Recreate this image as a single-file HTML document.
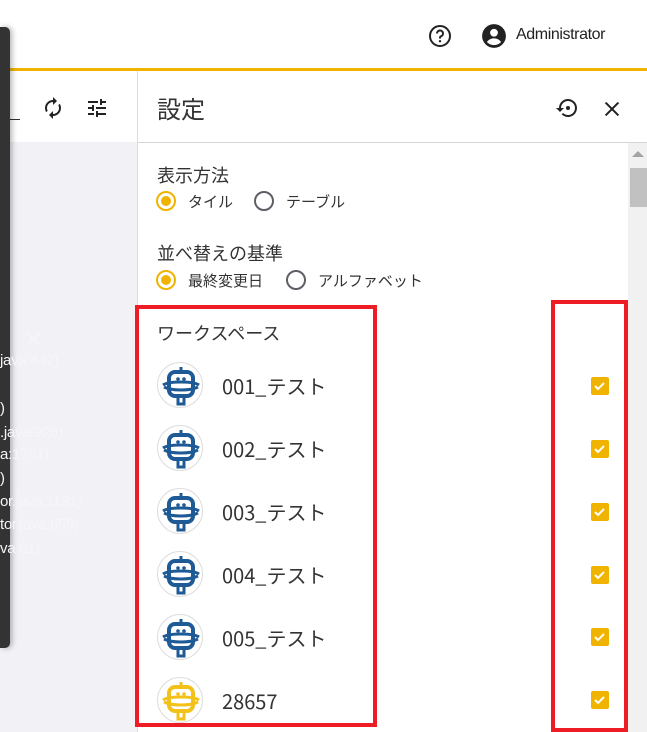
<!DOCTYPE html>
<html><head><meta charset="utf-8"><style>
*{margin:0;padding:0;box-sizing:border-box}
body{width:647px;height:732px;overflow:hidden;background:#fff;font-family:"Liberation Sans","Noto Sans CJK JP",sans-serif;color:#333;position:relative}
.abs{position:absolute}
.t{font-family:"Noto Sans CJK JP","Liberation Sans",sans-serif}
.radio{position:absolute;width:20px;height:20px;border-radius:50%;border:2px solid #5f5d66}
.radio.on{border-color:#f0b400}
.radio.on::after{content:"";position:absolute;left:3px;top:3px;width:10px;height:10px;border-radius:50%;background:#f0b400}
.cb{position:absolute;left:591px;width:18px;height:18px;border-radius:2px;background:#f0b400}
.av{position:absolute;left:157px;width:46px;height:46px;border-radius:50%;border:1px solid #ddd;background:#fff;overflow:hidden}
.nm{position:absolute;left:222px;font-size:20px;color:#333}
.lg{position:absolute;font-size:15px;color:#f6f6f9;font-family:"Liberation Sans",sans-serif;letter-spacing:-0.3px}
</style></head><body>
<!-- header -->
<div class="abs" style="left:0;top:68px;width:647px;height:3px;background:#f0b400"></div>
<svg class="abs" style="left:428px;top:24px" width="24" height="24" viewBox="0 0 24 24"><circle cx="12" cy="12" r="10" fill="none" stroke="#222" stroke-width="2"/><path d="M9 9.5a3 3 0 1 1 4 2.8c-.7.3-1 .8-1 1.5v.7" fill="none" stroke="#222" stroke-width="2"/><circle cx="12" cy="17.2" r="1.2" fill="#222"/></svg>
<svg class="abs" style="left:481px;top:23px" width="26" height="26" viewBox="0 0 24 24"><circle cx="12" cy="12" r="11" fill="#222"/><circle cx="12" cy="9" r="3.6" fill="#fff"/><path d="M5.5 17.5c1.5-2.3 4-3.3 6.5-3.3s5 1 6.5 3.3c-1.6 1.8-4 2.8-6.5 2.8s-4.9-1-6.5-2.8z" fill="#fff"/></svg>
<div class="abs" style="left:516px;top:26px;font-size:16px;color:#222;letter-spacing:-0.4px">Administrator</div>
<!-- left column -->
<div class="abs" style="left:0;top:71px;width:137px;height:71px;background:#fff"></div>
<div class="abs" style="left:0;top:142px;width:137px;height:590px;background:#f2f2f6"></div>
<div class="abs" style="left:137px;top:71px;width:1px;height:661px;background:#ddd"></div>
<div class="abs" style="left:0;top:119px;width:20px;height:1px;background:#333"></div>
<svg class="abs" style="left:41px;top:96px" width="24" height="24" viewBox="0 0 24 24"><path d="M12 6v3l4-4-4-4v3c-4.4 0-8 3.6-8 8 0 1.6.5 3 1.2 4.3L6.7 14.8C6.3 14 6 13 6 12c0-3.3 2.7-6 6-6zm6.8 1.7L17.3 9.2c.4.8.7 1.8.7 2.8 0 3.3-2.7 6-6 6v-3l-4 4 4 4v-3c4.4 0 8-3.6 8-8 0-1.6-.5-3-1.2-4.3z" fill="#222"/></svg>
<svg class="abs" style="left:85px;top:96px" width="24" height="24" viewBox="0 0 24 24"><path d="M3 17v2h6v-2H3zM3 5v2h10V5H3zm10 16v-2h8v-2h-8v-2h-2v6h2zM7 9v2H3v2h4v2h2V9H7zm14 4v-2H11v2h10zm-6-4h2V7h4V5h-4V3h-2v6z" fill="#222"/></svg>
<div class="abs" style="left:0;top:27px;width:10px;height:621px;background:#333;border-radius:0 5px 5px 0;box-shadow:2px 0 6px rgba(0,0,0,.3)"></div>
<div class="lg" style="left:24px;top:327px;font-size:22px">✕</div>
<div class="lg" style="left:0;top:352px">java:442)</div>
<div class="lg" style="left:0;top:400px">)</div>
<div class="lg" style="left:0;top:424px">.java:926)</div>
<div class="lg" style="left:0;top:446px">a:1791)</div>
<div class="lg" style="left:0;top:470px">)</div>
<div class="lg" style="left:0;top:493px">or.java:1191)</div>
<div class="lg" style="left:0;top:516px">tor.java:659)</div>
<div class="lg" style="left:0;top:540px">va:61)</div>
<!-- panel header -->
<div class="abs t" style="left:157px;top:90px;font-size:24px;color:#333">設定</div>
<svg class="abs" style="left:555px;top:96px" width="24" height="24" viewBox="0 0 24 24"><path d="M13 3a9 9 0 0 0-9 9H1l4 4 4-4H6a7 7 0 1 1 2.05 4.95l-1.42 1.42A9 9 0 1 0 13 3z" fill="#222"/><circle cx="13" cy="12" r="2" fill="#222"/></svg>
<svg class="abs" style="left:601px;top:98px" width="22" height="22" viewBox="0 0 24 24"><path d="M5 5l14 14M19 5L5 19" stroke="#222" stroke-width="2.2"/></svg>
<div class="abs" style="left:138px;top:142px;width:509px;height:1px;background:#d5d5d5"></div>
<!-- scrollbar -->
<div class="abs" style="left:628px;top:143px;width:19px;height:589px;background:#f1f1f1"></div>
<div class="abs" style="left:632px;top:151px;width:0;height:0;border-left:6px solid transparent;border-right:6px solid transparent;border-bottom:6px solid #a3a3a3"></div>
<div class="abs" style="left:630px;top:168px;width:17px;height:39px;background:#c1c1c1"></div>
<!-- settings -->
<div class="abs t" style="left:157px;top:162px;font-size:18px">表示方法</div>
<div class="radio on" style="left:156px;top:191px"></div>
<div class="abs t" style="left:188px;top:191px;font-size:15px">タイル</div>
<div class="radio" style="left:254px;top:191px"></div>
<div class="abs t" style="left:286px;top:191px;font-size:15px">テーブル</div>
<div class="abs t" style="left:157px;top:240px;font-size:18px">並べ替えの基準</div>
<div class="radio on" style="left:156px;top:270px"></div>
<div class="abs t" style="left:188px;top:270px;font-size:15px">最終変更日</div>
<div class="radio" style="left:286px;top:270px"></div>
<div class="abs t" style="left:318px;top:270px;font-size:15px">アルファベット</div>
<div class="abs t" style="left:157px;top:320px;font-size:18px">ワークスペース</div>

<svg width="0" height="0" style="position:absolute"><defs>
<g id="bot"><path d="M23 4v5" stroke="currentColor" stroke-width="3"/><rect x="11" y="9" width="24" height="24" rx="6" fill="none" stroke="currentColor" stroke-width="4"/><path d="M5 22c6-4 30-4 36 0M6 24c8 4 26 4 34 0" fill="none" stroke="currentColor" stroke-width="3"/><circle cx="20" cy="16" r="1.8" fill="currentColor"/><circle cx="26" cy="16" r="1.8" fill="currentColor"/><path d="M20 35v6h6v-6" fill="none" stroke="currentColor" stroke-width="3"/></g>
</defs></svg>

<div class="av" style="top:362px;color:#1e5a96"><svg width="46" height="46"><use href="#bot"/></svg></div>
<div class="nm t" style="top:371px">001_テスト</div>
<div class="cb" style="top:377px"></div>
<div class="av" style="top:425px;color:#1e5a96"><svg width="46" height="46"><use href="#bot"/></svg></div>
<div class="nm t" style="top:434px">002_テスト</div>
<div class="cb" style="top:440px"></div>
<div class="av" style="top:488px;color:#1e5a96"><svg width="46" height="46"><use href="#bot"/></svg></div>
<div class="nm t" style="top:497px">003_テスト</div>
<div class="cb" style="top:503px"></div>
<div class="av" style="top:551px;color:#1e5a96"><svg width="46" height="46"><use href="#bot"/></svg></div>
<div class="nm t" style="top:560px">004_テスト</div>
<div class="cb" style="top:566px"></div>
<div class="av" style="top:614px;color:#1e5a96"><svg width="46" height="46"><use href="#bot"/></svg></div>
<div class="nm t" style="top:623px">005_テスト</div>
<div class="cb" style="top:628px"></div>
<div class="av" style="top:677px;color:#f3c21a"><svg width="46" height="46"><use href="#bot"/></svg></div>
<div class="nm t" style="top:686px">28657</div>
<div class="cb" style="top:691px"></div>
<svg class="abs" style="left:0;top:0" width="647" height="732"><g fill="none" stroke="#fff" stroke-width="2">
<path d="M595 386l3 3 6-6"/><path d="M595 449l3 3 6-6"/><path d="M595 512l3 3 6-6"/><path d="M595 575l3 3 6-6"/><path d="M595 637l3 3 6-6"/><path d="M595 700l3 3 6-6"/></g></svg>
<!-- red boxes -->
<div class="abs" style="left:135px;top:305px;width:242px;height:422px;border:4px solid #ee1c25"></div>
<div class="abs" style="left:551px;top:300px;width:77px;height:432px;border:4px solid #ee1c25"></div>
</body></html>
